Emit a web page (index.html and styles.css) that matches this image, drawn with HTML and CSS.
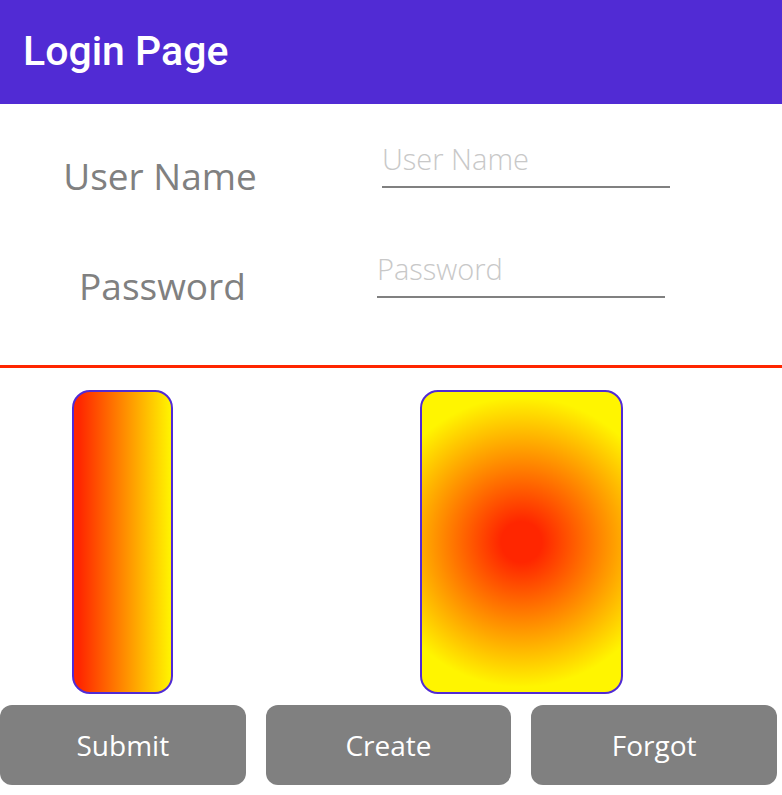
FILE: index.html
```html
<!DOCTYPE html>
<html>
<head>
<meta charset="utf-8">
<link rel="stylesheet" href="styles.css">
</head>
<body>
<header class="topbar"><h1 class="title">Login Page</h1></header>
<main class="page">
  <section class="form">
    <div class="row row-user">
      <div class="label">User Name</div>
      <div class="entry entry-user"><span class="placeholder">User Name</span></div>
    </div>
    <div class="row row-pass">
      <div class="label label-pass">Password</div>
      <div class="entry entry-pass"><span class="placeholder">Password</span></div>
    </div>
  </section>
  <hr class="divider">
  <section class="grid">
    <div class="cell cell-left"><div class="box box-linear"></div></div>
    <div class="cell cell-right"><div class="box box-radial"></div></div>
    <button class="btn">Submit</button>
    <button class="btn">Create</button>
    <button class="btn">Forgot</button>
  </section>
</main>
</body>
</html>
```
FILE: styles.css
```css
html, body { margin: 0; padding: 0; background: #fff; }
body { width: 782px; height: 795px; overflow: hidden; font-family: "Open Sans", "Liberation Sans", sans-serif; }

.topbar {
  height: 104px;
  background: #512BD4;
  display: flex;
  align-items: center;
  padding-left: 23px;
  box-sizing: border-box;
}
.title {
  margin: 0;
  font-family: Roboto, "Liberation Sans", sans-serif;
  font-weight: 500;
  font-size: 41px;
  color: #fff;
  line-height: 1;
  padding-bottom: 2px;
}

.form { height: 261px; box-sizing: border-box; }
.row { display: grid; grid-template-columns: 320px 1fr; align-items: start; }
.row-user { padding-top: 36px; }
.row-pass { padding-top: 50px; }

.label {
  text-align: center;
  font-size: 37px;
  color: #808080;
  line-height: 48px;
  margin-top: 12px;
}
.label-pass { padding-left: 5px; margin-top: 12px; }

.entry {
  width: 288px;
  height: 48px;
  box-sizing: border-box;
  border-bottom: 2px solid #808080;
}
.entry-user { margin-left: 62px; }
.entry-pass { margin-left: 57px; }
.placeholder {
  display: block;
  font-size: 29px;
  font-weight: 300;
  color: #c8c8c8;
  line-height: 38px;
}

.divider {
  margin: 0;
  border: 0;
  height: 3px;
  background: #FF2600;
}

.grid {
  display: grid;
  grid-template-columns: repeat(3, 1fr);
  column-gap: 20px;
  row-gap: 11px;
  width: 777px;
  padding-top: 22px;
}
.cell { display: flex; justify-content: center; height: 304px; }
.cell-right { grid-column: 2 / 4; }
.box {
  height: 304px;
  box-sizing: border-box;
  border: 2px solid #512BD4;
  border-radius: 18px;
}
.box-linear {
  width: 101px;
  background: linear-gradient(to right, #FF2600 5%, #FFF500 100%);
}
.box-radial {
  width: 203px;
  background: radial-gradient(circle 145px at 50% 50%, #FF2600 14%, #FFF500 100%);
}

.btn {
  height: 80px;
  border: 0;
  border-radius: 12px;
  background: #808080;
  color: #fff;
  font-family: "Open Sans", "Liberation Sans", sans-serif;
  font-size: 28px;
  padding: 0;
}
```
